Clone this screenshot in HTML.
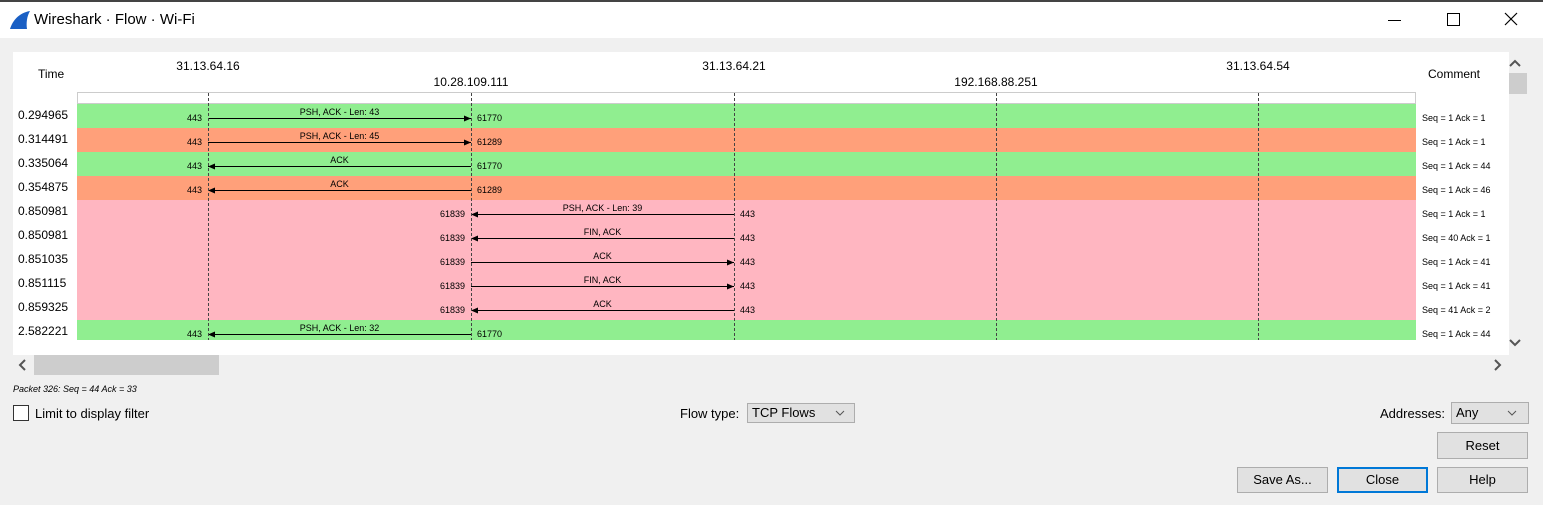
<!DOCTYPE html>
<html><head><meta charset="utf-8"><style>
body{margin:0;width:1543px;height:505px;background:#f0f0f0;font-family:"Liberation Sans",sans-serif;position:relative;overflow:hidden;font-size:13px;color:#000}
.a{position:absolute}
.btn{position:absolute;background:#e1e1e1;border:1px solid #adadad;box-sizing:border-box;text-align:center;font-size:13px;line-height:28px}
</style></head><body>
<div class="a" style="left:0;top:0;width:1543px;height:38px;background:#fff"></div>
<div class="a" style="left:0;top:0;width:1543px;height:2px;background:#444"></div>
<svg class="a" style="left:9px;top:10px" width="22" height="20"><path d="M1 19 C4 10 10 3 21 1 C18 6 17 13 18 19 Z" fill="#1a5fc4"/></svg>
<div class="a" style="left:34px;top:11px;font-size:15px">Wireshark · Flow · Wi-Fi</div>
<div class="a" style="left:1388px;top:20px;width:13px;height:1px;background:#000"></div>
<div class="a" style="left:1447px;top:13px;width:11px;height:11px;border:1px solid #000"></div>
<svg class="a" style="left:1504px;top:12px" width="14" height="14"><path d="M1 1L13 13M13 1L1 13" stroke="#000" stroke-width="1.2"/></svg>
<div class="a" style="left:13px;top:52px;width:1496px;height:303px;background:#fff"></div>
<div class="a" style="left:1509px;top:73px;width:18px;height:21px;background:#cdcdcd"></div>
<div class="a" style="left:34px;top:355px;width:185px;height:20px;background:#cdcdcd"></div>
<svg class="a" style="left:0;top:0" width="1543" height="505" font-family="Liberation Sans, sans-serif">
<path d="M1510 66l5-5 5 5M1510 340l5 5 5-5M25 360l-5 5 5 5M1495 360l5 5-5 5" stroke="#555" stroke-width="2" fill="none"/>
<path d="M839 410l4 4 4-4M1510 410l4 4 4-4" stroke="#555" stroke-width="1" fill="none"/>
<text x="38" y="78" font-size="12">Time</text>
<text x="1428" y="78" font-size="12">Comment</text>
<g font-size="12" text-anchor="middle">
<text x="208" y="70">31.13.64.16</text><text x="471" y="86">10.28.109.111</text>
<text x="734" y="70">31.13.64.21</text><text x="996" y="86">192.168.88.251</text>
<text x="1258" y="70">31.13.64.54</text></g>
<rect x="77.5" y="92.5" width="1338" height="11" fill="#fff" stroke="#ccc"/>
<g id="rows"></g>
</svg>
<script>
var rows=[["0.294965","#90ee90",208,471,"PSH, ACK - Len: 43","443","61770","Seq = 1 Ack = 1"],
["0.314491","#ffa07a",208,471,"PSH, ACK - Len: 45","443","61289","Seq = 1 Ack = 1"],
["0.335064","#90ee90",471,208,"ACK","443","61770","Seq = 1 Ack = 44"],
["0.354875","#ffa07a",471,208,"ACK","443","61289","Seq = 1 Ack = 46"],
["0.850981","#ffb6c1",734,471,"PSH, ACK - Len: 39","61839","443","Seq = 1 Ack = 1"],
["0.850981","#ffb6c1",734,471,"FIN, ACK","61839","443","Seq = 40 Ack = 1"],
["0.851035","#ffb6c1",471,734,"ACK","61839","443","Seq = 1 Ack = 41"],
["0.851115","#ffb6c1",471,734,"FIN, ACK","61839","443","Seq = 1 Ack = 41"],
["0.859325","#ffb6c1",734,471,"ACK","61839","443","Seq = 41 Ack = 2"],
["2.582221","#90ee90",471,208,"PSH, ACK - Len: 32","443","61770","Seq = 1 Ack = 44"]];
var s="";
rows.forEach(function(r,i){var t=104+24*i;
s+='<rect x="77" y="'+t+'" width="1339" height="'+(i==9?20:24)+'" fill="'+r[1]+'"/>';
s+='<text x="18" y="'+(t+15)+'" font-size="12">'+r[0]+'</text>';
s+='<text x="1422" y="'+(t+17)+'" font-size="9">'+r[7]+'</text>';
var a=Math.min(r[2],r[3]),b=Math.max(r[2],r[3]),y=t+14.5;
s+='<text x="'+(a+b)/2+'" y="'+(t+11)+'" font-size="9" text-anchor="middle">'+r[4]+'</text>';
s+='<text x="'+(a-6)+'" y="'+(t+17)+'" font-size="9" text-anchor="end">'+r[5]+'</text>';
s+='<text x="'+(b+6)+'" y="'+(t+17)+'" font-size="9">'+r[6]+'</text>';
s+='<line x1="'+a+'" x2="'+b+'" y1="'+y+'" y2="'+y+'" stroke="#000"/>';
var e=r[3],d=r[3]>r[2]?-1:1;
s+='<path d="M'+e+' '+y+'l'+(7*d)+' -3v6z" fill="#000"/>';});
[208,471,734,996,1258].forEach(function(x){s+='<line x1="'+(x+.5)+'" x2="'+(x+.5)+'" y1="93" y2="340" stroke="#444" stroke-dasharray="3,2"/>';});
document.getElementById("rows").innerHTML=s;
</script>
<div class="a" style="left:13px;top:384px;font-size:9px;font-style:italic">Packet 326: Seq = 44 Ack = 33</div>
<div class="a" style="left:13px;top:405px;width:14px;height:14px;border:1px solid #333;background:#fff"></div>
<div class="a" style="left:35px;top:406px">Limit to display filter</div>
<div class="a" style="left:680px;top:406px">Flow type:</div>
<div class="a" style="left:747px;top:403px;width:108px;height:20px;border:1px solid #adadad;box-sizing:border-box;background:#e1e1e1;padding-left:4px;line-height:18px">TCP Flows</div>
<div class="a" style="left:1380px;top:406px">Addresses:</div>
<div class="a" style="left:1451px;top:402px;width:78px;height:22px;border:1px solid #adadad;box-sizing:border-box;background:#e1e1e1;padding-left:4px;line-height:20px">Any</div>
<svg class="a" style="left:0;top:0" width="1543" height="505"><path d="M836 411l4 4 4-4M1508 411l4 4 4-4" stroke="#555" fill="none"/></svg>
<div class="btn" style="left:1437px;top:432px;width:91px;height:27px;line-height:25px">Reset</div>
<div class="btn" style="left:1237px;top:467px;width:91px;height:26px;line-height:24px">Save As...</div>
<div class="btn" style="left:1337px;top:467px;width:91px;height:26px;line-height:22px;border:2px solid #0078d7">Close</div>
<div class="btn" style="left:1437px;top:467px;width:91px;height:26px;line-height:24px">Help</div>
</body></html>
